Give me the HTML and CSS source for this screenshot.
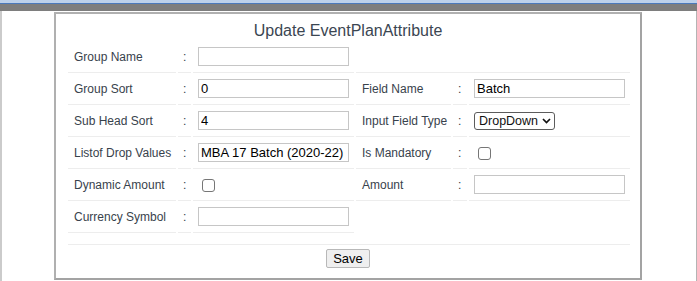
FILE: index.html
```html
<!DOCTYPE html>
<html lang="en">
<head>
    <meta charset="UTF-8">
    <title>Update EventPlanAttribute</title>
    <link rel="stylesheet" href="styles.css">
</head>
<body>
<div class="topbar"></div>
<div class="subbar"></div>
<div class="frame">
    <div class="panel">
        <h2 class="panel-title">Update EventPlanAttribute</h2>
        <table class="form-grid">
            <colgroup>
                <col class="col-label">
                <col class="col-colon">
                <col class="col-field">
                <col class="col-label2">
                <col class="col-colon2">
                <col class="col-field">
            </colgroup>
            <tr>
                <td class="lbl">Group Name</td>
                <td class="colon">:</td>
                <td class="fld"><input type="text" class="txt"></td>
                <td colspan="3"></td>
            </tr>
            <tr>
                <td class="lbl">Group Sort</td>
                <td class="colon">:</td>
                <td class="fld"><input type="text" class="txt" value="0"></td>
                <td class="lbl">Field Name</td>
                <td class="colon">:</td>
                <td class="fld"><input type="text" class="txt" value="Batch"></td>
            </tr>
            <tr>
                <td class="lbl">Sub Head Sort</td>
                <td class="colon">:</td>
                <td class="fld"><input type="text" class="txt" value="4"></td>
                <td class="lbl">Input Field Type</td>
                <td class="colon">:</td>
                <td class="fld">
                    <span class="select-wrap">
                        <select class="sel">
                            <option>DropDown</option>
                        </select>
                        <svg class="chevron" width="9" height="6" viewBox="0 0 9 6"><polyline points="1,1 4.5,4.5 8,1" fill="none" stroke="#111" stroke-width="1.7"/></svg>
                    </span>
                </td>
            </tr>
            <tr>
                <td class="lbl">Listof Drop Values</td>
                <td class="colon">:</td>
                <td class="fld"><input type="text" class="txt" value="MBA 17 Batch (2020-22)"></td>
                <td class="lbl">Is Mandatory</td>
                <td class="colon">:</td>
                <td class="fld"><input type="checkbox" class="chk"></td>
            </tr>
            <tr>
                <td class="lbl">Dynamic Amount</td>
                <td class="colon">:</td>
                <td class="fld"><input type="checkbox" class="chk"></td>
                <td class="lbl">Amount</td>
                <td class="colon">:</td>
                <td class="fld"><input type="text" class="txt"></td>
            </tr>
            <tr>
                <td class="lbl">Currency Symbol</td>
                <td class="colon">:</td>
                <td class="fld"><input type="text" class="txt"></td>
                <td colspan="3" class="blank"></td>
            </tr>
            <tr class="spacer">
                <td colspan="6"></td>
            </tr>
        </table>
        <div class="actions">
            <button class="btn-save">Save</button>
        </div>
    </div>
</div>
</body>
</html>
```

FILE: styles.css
```css
body {
    margin: 0;

    font-family: "Liberation Sans", Arial, sans-serif;

    background-color: #fff;
}

.topbar {
    height: 3px;

    border-bottom: 1px solid #4b79bb;
    background-color: #bdd1eb;
}

.subbar {
    height: 7px;

    background-color: #7e7e7e;
}

.frame {
    box-sizing: border-box;
    height: 270px;
    padding: 1px 0 0 52px;

    border-left: 2px solid #cbcbcb;
    border-right: 1px solid #b4b4b4;
}

.panel {
    box-sizing: border-box;
    width: 588px;
    padding-bottom: 10px;

    border: 2px solid #a3a3a3;
    border-top-color: #b0b0b0;
    border-left-color: #b0b0b0;
}

.panel-title {
    font-size: 16px;
    font-weight: normal;
    line-height: 20px;

    margin: 7px 0 0;

    text-align: center;

    color: #3b4652;
}

.form-grid {
    width: 566px;
    margin-left: 10px;

    table-layout: fixed;
    border-collapse: separate;
    border-spacing: 2px 0;
}

.col-label {
    width: 108px;
}

.col-colon {
    width: 13px;
}

.col-field {
    width: 161px;
}

.col-label2 {
    width: 95px;
}

.col-colon2 {
    width: 14px;
}

.form-grid tr {
    height: 32px;
}

.form-grid td {
    font-size: 12px;

    padding: 0 0 0 5px;

    vertical-align: middle;
    white-space: nowrap;

    color: #38424c;
    border-bottom: 1px solid #ededed;
}

.form-grid td.lbl {
    padding-left: 6px;
}

.form-grid td.blank {
    border-bottom: none;
}

.form-grid tr.spacer {
    height: 12px;
}

.txt {
    font-family: "Liberation Sans", Arial, sans-serif;
    font-size: 13px;

    box-sizing: border-box;
    width: 151px;
    height: 19px;
    margin: 0;
    padding: 1px 2px;

    vertical-align: middle;

    color: #000;
    border: 1px solid #c6c6c6;
    background-color: #fff;
}

.select-wrap {
    position: relative;

    display: inline-block;

    vertical-align: middle;
}

.sel {
    font-family: "Liberation Sans", Arial, sans-serif;
    font-size: 12.5px;

    box-sizing: border-box;
    height: 18px;
    margin: 0;
    padding: 0 15px 0 4px;

    color: #111;
    border: 1px solid #5c5c5c;
    border-radius: 3px;
    background-color: #fff;

    -webkit-appearance: none;
    appearance: none;
}

.chevron {
    position: absolute;
    top: 6px;
    right: 4px;

    pointer-events: none;
}

.chk {
    box-sizing: border-box;
    width: 13px;
    height: 13px;
    margin: 0 0 0 4px;

    vertical-align: middle;

    border: 1px solid #767676;
    border-radius: 3px;
    background-color: #fff;

    -webkit-appearance: none;
    appearance: none;
}

.actions {
    display: flex;
    justify-content: center;

    padding-top: 4px;
}

.btn-save {
    font-family: "Liberation Sans", Arial, sans-serif;
    font-size: 13px;
    line-height: 15px;

    height: 19px;
    margin: 0;
    padding: 1px 6px;

    color: #000;
    border: 1px solid #b8b8b8;
    border-radius: 2px;
    background-color: #efefef;
}
```
